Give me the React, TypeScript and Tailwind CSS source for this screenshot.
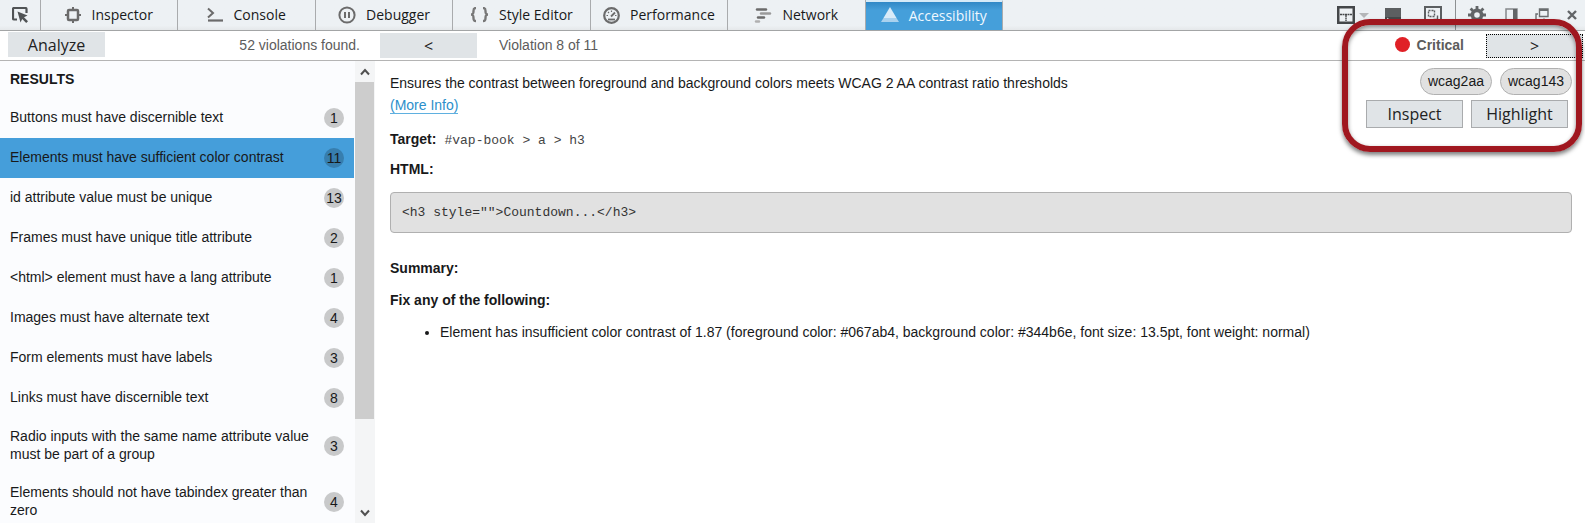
"use client";

import React from 'react';

const violations = [
    { title: 'Buttons must have discernible text', count: 1 },
    { title: 'Elements must have sufficient color contrast', count: 11 },
    { title: 'id attribute value must be unique', count: 13 },
    { title: 'Frames must have unique title attribute', count: 2 },
    { title: '<html> element must have a lang attribute', count: 1 },
    { title: 'Images must have alternate text', count: 4 },
    { title: 'Form elements must have labels', count: 3 },
    { title: 'Links must have discernible text', count: 8 },
    { title: 'Radio inputs with the same name attribute value must be part of a group', count: 3 },
    { title: 'Elements should not have tabindex greater than zero', count: 4 },
];

const tabs = [
    { label: 'Inspector', icon: InspectorIcon },
    { label: 'Console', icon: ConsoleIcon },
    { label: 'Debugger', icon: DebuggerIcon },
    { label: 'Style Editor', icon: StyleIcon },
    { label: 'Performance', icon: PerformanceIcon },
    { label: 'Network', icon: NetworkIcon },
    { label: 'Accessibility', icon: AccessibilityIcon },
];

export default function App() {
    return (
        <div className="relative flex h-screen flex-col overflow-hidden bg-white pb-[3px] font-['Liberation_Sans',sans-serif] text-sm text-[#18191a]">
            <Toolbar />

            {/* Action bar */}
            <div className="flex h-[30px] shrink-0 items-center border-b border-[#b4b4b4] bg-white text-[#5c5c5c]">
                <div className="flex w-[380px] shrink-0 items-center justify-between pb-0.5 pl-2 pr-5">
                    <ToolButton className="h-[25px]">Analyze</ToolButton>
                    <span>52 violations found.</span>
                </div>
                <ToolButton className="h-[25px]">&lt;</ToolButton>
                <span className="ml-[22px] pb-0.5">Violation 8 of 11</span>
                <span className="ml-auto mr-[22px] flex items-center gap-[7px] pb-0.5 font-bold">
                    <span className="h-[15px] w-[15px] rounded-full bg-[#e02026]" />
                    Critical
                </span>
                <ToolButton className="mr-0.5 h-6 border border-dotted border-black">&gt;</ToolButton>
            </div>

            <div className="flex min-h-0 flex-1">
                <Results />
                <Details />
            </div>

            {/* Callout frame over the issue actions */}
            <div className="pointer-events-none absolute right-[3px] top-[19px] h-[133px] w-60 rounded-[28px] border-6 border-[#a0171f] shadow-[0_3px_4px_rgba(0,0,0,0.5),inset_0_2px_4px_rgba(0,0,0,0.45)]" />
        </div>
    );
}

function Toolbar() {
    return (
        <div className="flex h-[31px] shrink-0 border-b border-[#a3a5a6] bg-linear-to-b from-[#edf1f4] from-85% to-[#e5e8ea] font-['Open_Sans',sans-serif]">
            <button aria-label="Pick an element" className="flex w-[41px] items-center justify-center border-r border-[#a9abad]">
                <PickIcon />
            </button>
            <div role="tablist" className="flex w-[962px]">
                {tabs.map(({ label, icon: Icon }) => {
                    const active = label === 'Accessibility';
                    return (
                        <button
                            key={label}
                            role="tab"
                            aria-selected={active}
                            className={`flex flex-1 items-center justify-center gap-2.5 whitespace-nowrap border-r border-[#a9abad] ${active ? 'border-t-2 border-t-[#d5eaf8] bg-linear-to-b from-[#3088c6] to-[#459fda] to-30% text-[#f0f8ff]' : ''}`}
                        >
                            <Icon />
                            {label}
                        </button>
                    );
                })}
            </div>
            <div className="ml-auto flex items-center text-[#54585a]">
                <button aria-label="Select frame" className="flex items-center gap-1">
                    <FrameIcon />
                    <svg width="10" height="5" viewBox="0 0 10 5"><path d="M0 0h10L5 5z" fill="#b4b6b8" /></svg>
                </button>
                <button aria-label="Split console" className="ml-4"><SplitIcon /></button>
                <button aria-label="Responsive mode" className="ml-[23px]"><ResponsiveIcon /></button>
                <span className="ml-[13px] h-full w-px bg-[#8d9092]" />
                <button aria-label="Settings" className="ml-3"><GearIcon /></button>
                <button aria-label="Dock to side" className="ml-[19px]"><DockIcon /></button>
                <button aria-label="Separate window" className="ml-[17px]"><WindowIcon /></button>
                <button aria-label="Close" className="ml-[18px] mr-2"><CloseIcon /></button>
            </div>
        </div>
    );
}

function Results() {
    return (
        <>
            <div className="w-[355px] shrink-0 overflow-hidden bg-[#fbfcfe]">
                <h2 className="px-[10px] pb-2.5 pt-[9px] font-bold leading-[18px]">RESULTS</h2>
                <ul>
                    {violations.map(({ title, count }, index) => {
                        const selected = index === 1;
                        return (
                            <li key={title}>
                                <button className={`flex min-h-10 w-[354px] items-center justify-between px-[10px] pb-[11px] pt-[9px] text-left leading-[18px] ${selected ? 'bg-[#459eda]' : ''}`}>
                                    <span className="w-[306px]">{title}</span>
                                    <span className={`-mb-px mt-px flex h-5 w-5 shrink-0 items-center justify-center rounded-full ${selected ? 'bg-[#377eae]' : 'bg-[#c8c9ca]'}`}>{count}</span>
                                </button>
                            </li>
                        );
                    })}
                </ul>
            </div>
            <div className="flex w-5 shrink-0 flex-col bg-[#f4f5f6] text-[#505050]">
                <div className="flex h-[21px] items-center justify-center"><Chevron up /></div>
                <div className="h-[337px] w-[19px] bg-[#cdcdcd]" />
                <div className="mt-auto flex h-[21px] items-center justify-center"><Chevron /></div>
            </div>
        </>
    );
}

function Details() {
    return (
        <div className="min-w-0 flex-1 pl-[15px] pr-[13px] pt-[7px]">
            <div className="flex items-start justify-between">
                <div className="pt-1">
                    <p className="leading-[22px]">Ensures the contrast between foreground and background colors meets WCAG 2 AA contrast ratio thresholds</p>
                    <p className="leading-[22px]">
                        <a href="#more-info" className="border-b border-[#5fb0e0] text-[#2b8fcb]">(More Info)</a>
                    </p>
                    <p className="mt-3 leading-[22px]">
                        <b>Target:</b>
                        <code className="ml-2 font-['Liberation_Mono',monospace] text-[13px] text-[#444]">#vap-book &gt; a &gt; h3</code>
                    </p>
                    <p className="mt-1.5 font-bold leading-[22px]">HTML:</p>
                </div>
                <div className="flex flex-col items-end gap-[5px]">
                    <div className="flex gap-2">
                        <Tag>wcag2aa</Tag>
                        <Tag>wcag143</Tag>
                    </div>
                    <div className="mr-1 flex gap-2">
                        <ToolButton className="h-7 border border-[#a9abad]">Inspect</ToolButton>
                        <ToolButton className="h-7 border border-[#a9abad]">Highlight</ToolButton>
                    </div>
                </div>
            </div>
            <pre className="mt-3 rounded-sm border border-[#b0b0b0] bg-[#e1e1e1] px-[11px] pb-[9px] pt-[10px] font-['Liberation_Mono',monospace] text-[13px] leading-5 text-[#333]">&lt;h3 style=""&gt;Countdown...&lt;/h3&gt;</pre>
            <p className="mt-6 font-bold leading-[22px]">Summary:</p>
            <p className="mt-[10px] font-bold leading-[22px]">Fix any of the following:</p>
            <ul className="mt-[10px] list-disc pl-[50px] leading-[22px]">
                <li>Element has insufficient color contrast of 1.87 (foreground color: #067ab4, background color: #344b6e, font size: 13.5pt, font weight: normal)</li>
            </ul>
        </div>
    );
}

function ToolButton({ className, children }: any) {
    return (
        <button className={`flex w-[97px] shrink-0 items-center justify-center bg-[#e0e4e7] font-['Open_Sans',sans-serif] text-base text-[#222] ${className}`}>
            {children}
        </button>
    );
}

function Tag({ children }: any) {
    return <span className="flex h-[27px] items-center rounded-full border border-[#b0b0b0] bg-[#e1e1e1] px-[7px] pb-0.5">{children}</span>;
}

function Chevron({ up }: { up?: boolean }) {
    return (
        <svg width="10" height="8" viewBox="0 0 10 8" fill="none" stroke="currentColor" strokeWidth="2">
            <path d={up ? 'M1 6.5L5 2l4 4.5' : 'M1 1.5L5 6l4-4.5'} />
        </svg>
    );
}

function PickIcon() {
    return (
        <svg width="16" height="16" viewBox="0 0 16 16">
            <path d="M5 12.5H2a1 1 0 0 1-1-1V2a1 1 0 0 1 1-1h11.5a1 1 0 0 1 1 1v4" fill="none" stroke="#505355" strokeWidth="2.2" />
            <path d="M5.5 4.5l10 4-3.5 1.7 4 4-1.800 1.800-4-4L8.5 15.5z" fill="#505355" />
        </svg>
    );
}

function InspectorIcon() {
    return (
        <svg width="16" height="16" viewBox="0 0 16 16" fill="none" stroke="#6b6b6b" strokeWidth="2">
            <rect x="3" y="3" width="10" height="10" rx="1" strokeWidth="2.5" />
            <path d="M8 0v3M8 13v3M0 8h3M13 8h3" />
        </svg>
    );
}

function ConsoleIcon() {
    return (
        <svg width="16" height="16" viewBox="0 0 16 16" fill="none" stroke="#6b6b6b">
            <path d="M1 1.5l5 4.5-5 4.5" strokeWidth="2" />
            <path d="M1 13.5h15" strokeWidth="2.2" />
        </svg>
    );
}

function DebuggerIcon() {
    return (
        <svg width="18" height="18" viewBox="0 0 18 18" fill="none" stroke="#6b6b6b">
            <circle cx="9" cy="9" r="7.6" strokeWidth="2" />
            <path d="M7 6v6M11 6v6" strokeWidth="2" />
        </svg>
    );
}

function StyleIcon() {
    return (
        <svg width="19" height="16" viewBox="0 0 19 16" fill="none" stroke="#777" strokeWidth="2.4">
            <path d="M6 1C3.5 1 3.5 2 3.5 4S3.5 7.5 1 7.5C3.5 7.5 3.5 9 3.5 11s0 3 2.5 3M13 1c2.5 0 2.5 1 2.5 3s0 3.5 2.5 3.5c-2.5 0-2.5 1.5-2.5 3.5s0 3-2.5 3" />
        </svg>
    );
}

function PerformanceIcon() {
    return (
        <svg width="17" height="17" viewBox="0 0 17 17" fill="none" stroke="#6b6b6b">
            <circle cx="8.5" cy="8.5" r="7.3" strokeWidth="2.2" />
            <path d="M8 9.5l4-4" strokeWidth="1.8" />
            <path d="M3.5 8.5h1.5M5 5l1 1M8.5 3.5V5M12 8.5h1.5" strokeWidth="1.2" />
            <path d="M5 12.5h7" strokeWidth="1.8" />
        </svg>
    );
}

function NetworkIcon() {
    return (
        <svg width="18" height="15" viewBox="0 0 18 15" strokeWidth="2.4" strokeLinecap="round">
            <path d="M3 1.5h9" stroke="#6b6b6b" />
            <path d="M7 5.5h9" stroke="#9a9a9a" />
            <path d="M4 9.5h6" stroke="#6b6b6b" />
            <path d="M2 13.5h3" stroke="#b0b0b0" />
        </svg>
    );
}

function AccessibilityIcon() {
    return (
        <svg width="18" height="15" viewBox="0 0 18 15" className="-mt-1">
            <path d="M9 0l6.5 11h-13z" fill="#d9ebf8" />
            <path d="M2.5 11h13L18 15H0z" fill="#a9d1ee" />
        </svg>
    );
}

function FrameIcon() {
    return (
        <svg width="18" height="18" viewBox="0 0 18 18" fill="none" stroke="#444749">
            <rect x="1.25" y="1.25" width="15.5" height="15.5" strokeWidth="2.5" />
            <path d="M3 8.5h12M9 9v6" strokeWidth="1.4" strokeDasharray="2 0.5" />
        </svg>
    );
}

function SplitIcon() {
    return (
        <svg width="16" height="16" viewBox="0 0 16 16">
            <path d="M0 1h16v14H0z" fill="#5c5f61" />
            <path d="M0 10h16v5H0z" fill="#45484a" />
            <path d="M2 11l2 1.5" stroke="#ddd" />
        </svg>
    );
}

function ResponsiveIcon() {
    return (
        <svg width="18" height="18" viewBox="0 0 18 18" fill="none" stroke="#5c5f61">
            <rect x="1" y="1" width="16" height="16" strokeWidth="2" />
            <path d="M4.5 4.5h6v6h-6z" strokeDasharray="2 1" strokeWidth="1.4" />
            <path d="M13.5 9.5v4h-4" strokeWidth="1.4" />
        </svg>
    );
}

function GearIcon() {
    return (
        <svg width="18" height="18" viewBox="0 0 18 18" fill="none" stroke="#626567">
            <circle cx="9" cy="9" r="4.6" strokeWidth="3.6" />
            <path d="M9 0v4M9 14v4M0 9h4M14 9h4M2.6 2.6l2.9 2.9M12.5 12.5l2.9 2.9M2.6 15.4l2.9-2.9M12.5 5.5l2.9-2.9" strokeWidth="2.8" />
        </svg>
    );
}

function DockIcon() {
    return (
        <svg width="13" height="14" viewBox="0 0 13 14">
            <rect x="1" y="1" width="11" height="12" fill="none" stroke="#85888a" strokeWidth="1.5" />
            <path d="M8 1h4v12H8z" fill="#626567" />
        </svg>
    );
}

function WindowIcon() {
    return (
        <svg width="14" height="14" viewBox="0 0 14 14" fill="none" stroke="#6a6d6f">
            <path d="M4.5 1h8.5v7.5H4.5z" strokeWidth="1.4" />
            <path d="M4.5 2h8.5" strokeWidth="2" />
            <path d="M3 6H1v7h8v-2.5" strokeWidth="1.4" />
        </svg>
    );
}

function CloseIcon() {
    return (
        <svg width="10" height="10" viewBox="0 0 10 10" stroke="#626567" strokeWidth="2.4">
            <path d="M1 1l8 8M9 1L1 9" />
        </svg>
    );
}
